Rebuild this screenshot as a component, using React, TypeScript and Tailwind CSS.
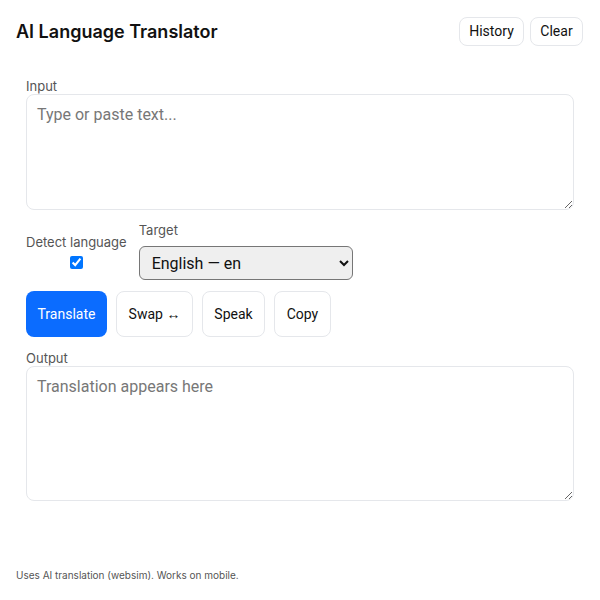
import React from "react";

export default function App() {
  return (
    <div className="w-[600px] h-[600px] bg-white px-4 pt-4 flex flex-col" style={{ fontFamily: "Inter, 'Noto Sans', sans-serif" }}>
      <header className="flex items-center justify-between">
        <h1 className="text-[18px] font-semibold text-[#111] leading-[29px] mt-[1px]">AI Language Translator</h1>
        <div className="flex gap-[6px] mr-[1px]" style={{ fontFamily: "Roboto, sans-serif" }}>
          <button className="h-[29px] w-[65px] rounded-[8px] border border-[#e5e7eb] bg-white text-[14px] text-[#111]">History</button>
          <button className="h-[29px] w-[53px] rounded-[8px] border border-[#e5e7eb] bg-white text-[14px] text-[#111]">Clear</button>
        </div>
      </header>

      <main className="px-[10px] mt-[32px] flex flex-col">
        <label className="text-[13px] leading-[16px] text-[#555]">Input</label>
        <textarea
          className="h-[116px] w-full rounded-[8px] border border-[#e5e7eb] px-[10px] py-[8px] text-[16px] placeholder:text-[#777] resize-y"
          style={{ fontFamily: "Roboto, sans-serif" }}
          placeholder="Type or paste text..."
        />

        <div className="flex items-center gap-[12px] mt-[12px]">
          <div className="flex flex-col items-center gap-[6px]">
            <span className="text-[13px] leading-[16px] text-[#555]">Detect language</span>
            <input type="checkbox" defaultChecked className="w-[13px] h-[13px] m-0" />
          </div>
          <div className="flex flex-col">
            <span className="text-[13px] leading-[16px] text-[#555] mb-[8px]">Target</span>
            <select
              className="w-[214px] h-[34px] rounded-[6px] border border-[#767676] bg-[#efefef] pl-[8px] pr-[4px] text-[16px] text-[#111]"
              style={{ fontFamily: "Roboto, sans-serif" }}
            >
              <option>English — en</option>
            </select>
          </div>
        </div>

        <div className="flex gap-[9px] mt-[11px]" style={{ fontFamily: "Roboto, sans-serif" }}>
          <button className="h-[46px] w-[81px] rounded-[8px] bg-[#0b6cff] text-white text-[14px]">Translate</button>
          <button className="h-[46px] w-[77px] rounded-[8px] border border-[#e5e7eb] bg-white text-[14px] text-[#111]">Swap ↔</button>
          <button className="h-[46px] w-[63px] rounded-[8px] border border-[#e5e7eb] bg-white text-[14px] text-[#111]">Speak</button>
          <button className="h-[46px] w-[57px] rounded-[8px] border border-[#e5e7eb] bg-white text-[14px] text-[#111]">Copy</button>
        </div>

        <label className="text-[13px] leading-[16px] text-[#555] mt-[13px]">Output</label>
        <textarea
          className="h-[135px] w-full rounded-[8px] border border-[#e5e7eb] px-[10px] py-[8px] text-[16px] placeholder:text-[#777] resize-y"
          style={{ fontFamily: "Roboto, sans-serif" }}
          placeholder="Translation appears here"
        />
      </main>

      <footer className="mt-[67px] text-[10px] leading-[14px] text-[#555]">
        Uses AI translation (websim). Works on mobile.
      </footer>
    </div>
  );
}
